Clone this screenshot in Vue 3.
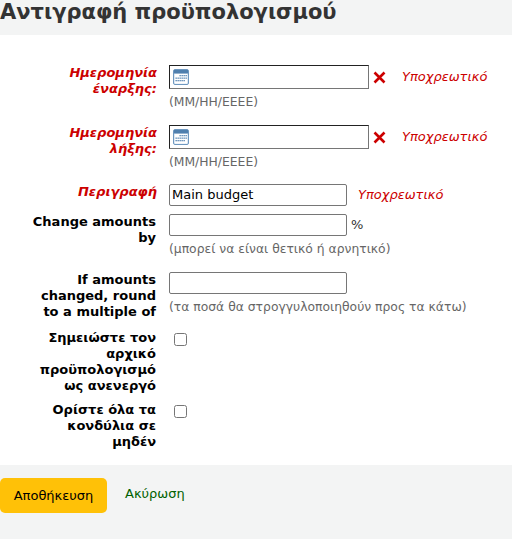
<script setup>
const rows = [
  { id: 'start', label: 'Ημερομηνία έναρξης:' },
  { id: 'end', label: 'Ημερομηνία λήξης:' }
]
</script>

<template>
  <div class="page">
    <h1 class="title">Αντιγραφή προϋπολογισμού</h1>
    <form class="form">
      <div v-for="row in rows" :key="row.id" class="row date-row">
        <label class="label required">{{ row.label }}</label>
        <div class="field">
          <div class="line">
            <div class="date-input">
              <svg class="cal" width="16" height="16" viewBox="0 0 16 16">
                <rect x="0.5" y="0.5" width="15" height="15" rx="1.5" fill="#dfe9f3" stroke="#6d97c0" />
                <rect x="1" y="1" width="14" height="3.5" fill="#4f7fae" />
                <rect x="2" y="5" width="12" height="9.5" fill="#fff" />
                <g fill="#4f7fae">
                  <rect x="6.5" y="6" width="1.3" height="1.3" />
                  <rect x="8.5" y="6" width="1.3" height="1.3" />
                  <rect x="10.5" y="6" width="1.3" height="1.3" />
                  <rect x="12.5" y="6" width="1.3" height="1.3" />
                  <rect x="2.5" y="8.5" width="1.3" height="1.3" />
                  <rect x="4.5" y="8.5" width="1.3" height="1.3" />
                  <rect x="6.5" y="8.5" width="1.3" height="1.3" />
                  <rect x="8.5" y="8.5" width="1.3" height="1.3" />
                  <rect x="10.5" y="8.5" width="1.3" height="1.3" />
                  <rect x="12.5" y="8.5" width="1.3" height="1.3" />
                  <rect x="2.5" y="11" width="1.3" height="1.3" />
                  <rect x="4.5" y="11" width="1.3" height="1.3" />
                  <rect x="6.5" y="11" width="1.3" height="1.3" />
                  <rect x="8.5" y="11" width="1.3" height="1.3" />
                  <rect x="10.5" y="11" width="1.3" height="1.3" />
                </g>
              </svg>
            </div>
            <svg class="clear" width="13" height="13" viewBox="0 0 13 13">
              <path d="M1.5 1.5 L11.5 11.5 M11.5 1.5 L1.5 11.5" stroke="#cc0000" stroke-width="2.6" fill="none" />
            </svg>
            <span class="req-note date-note">Υποχρεωτικό</span>
          </div>
          <div class="hint">(ΜΜ/ΗΗ/ΕΕΕΕ)</div>
        </div>
      </div>

      <div class="row desc-row">
        <label class="label required">Περιγραφή</label>
        <div class="line">
          <input class="text" type="text" value="Main budget" />
          <span class="req-note">Υποχρεωτικό</span>
        </div>
      </div>

      <div class="row amount-row">
        <label class="label">Change amounts by</label>
        <div class="field">
          <div class="line">
            <input class="text" type="text" />
            <span class="percent">%</span>
          </div>
          <div class="hint">(μπορεί να είναι θετικό ή αρνητικό)</div>
        </div>
      </div>

      <div class="row amount-row">
        <label class="label">If amounts changed, round to a multiple of</label>
        <div class="field">
          <div class="line">
            <input class="text" type="text" />
          </div>
          <div class="hint">(τα ποσά θα στρογγυλοποιηθούν προς τα κάτω)</div>
        </div>
      </div>

      <div class="row check-row">
        <label class="label">Σημειώστε τον αρχικό προϋπολογισμό ως ανενεργό</label>
        <input class="check" type="checkbox" />
      </div>

      <div class="row check-row">
        <label class="label">Ορίστε όλα τα κονδύλια σε μηδέν</label>
        <input class="check" type="checkbox" />
      </div>
    </form>
    <div class="actions">
      <button class="save" type="button">Αποθήκευση</button>
      <a class="cancel" href="#">Ακύρωση</a>
    </div>
  </div>
</template>

<style>
html, body {
  margin: 0;
  background: #fff;
}
</style>

<style scoped>
.page {
  width: 512px;
  height: 539px;
  overflow: hidden;
  font-family: "DejaVu Sans", sans-serif;
  font-size: 13px;
  line-height: 16px;
  color: #000;
}

.title {
  margin: 0;
  height: 35px;
  background: #f3f4f4;
  font-size: 21px;
  line-height: 24px;
  font-weight: bold;
  color: #333;
  overflow: hidden;
  white-space: nowrap;
}

.form {
  height: 430px;
  padding-top: 30px;
  box-sizing: border-box;
}

.row {
  display: flex;
  align-items: flex-start;
  gap: 13px;
}

.label {
  width: 156px;
  flex: none;
  box-sizing: border-box;
  padding-left: 30px;
  text-align: right;
  font-weight: bold;
}

.required {
  width: 157px;
  margin-right: -1px;
  color: #cc0000;
  font-style: italic;
}

.field {
  display: flex;
  flex-direction: column;
}

.line {
  display: flex;
  align-items: center;
}

.date-row {
  height: 60px;
}

.date-row:nth-child(2) {
  height: 59px;
}

.date-input {
  width: 200px;
  height: 24px;
  box-sizing: border-box;
  border: 1px solid #767676;
  border-top-color: #222;
  border-left-color: #222;
  padding: 2px 3px;
  display: flex;
  align-items: center;
}

.clear {
  margin-left: 4px;
}

.req-note {
  margin-left: 11px;
  color: #cc0000;
  font-style: italic;
}

.date-note {
  margin-left: 16px;
}

.hint {
  margin-top: 5px;
  color: #666;
  font-size: 12.35px;
  line-height: 16px;
}

.text {
  width: 178px;
  height: 22px;
  box-sizing: border-box;
  margin: 0;
  padding: 0 2px 2px;
  border: 1px solid #767676;
  border-radius: 2px;
  background: #fff;
  font-family: inherit;
  font-size: 13px;
  color: #000;
}

.percent {
  margin-left: 4px;
  color: #333;
}

.desc-row {
  height: 30px;
}

.amount-row {
  height: 58px;
}

.check-row {
  height: 72px;
}

.check {
  width: 13px;
  height: 13px;
  margin: 3px 0 0 5px;
}

.actions {
  height: 74px;
  background: #f3f4f4;
  box-sizing: border-box;
  padding-top: 13px;
  display: flex;
  align-items: flex-start;
}

.save {
  width: 107px;
  height: 35px;
  border: none;
  border-radius: 5px;
  background: #ffc107;
  font-family: inherit;
  font-size: 13px;
  color: #000;
  padding: 0;
}

.cancel {
  margin-left: 18px;
  margin-top: 8px;
  color: #006100;
  text-decoration: none;
}
</style>
